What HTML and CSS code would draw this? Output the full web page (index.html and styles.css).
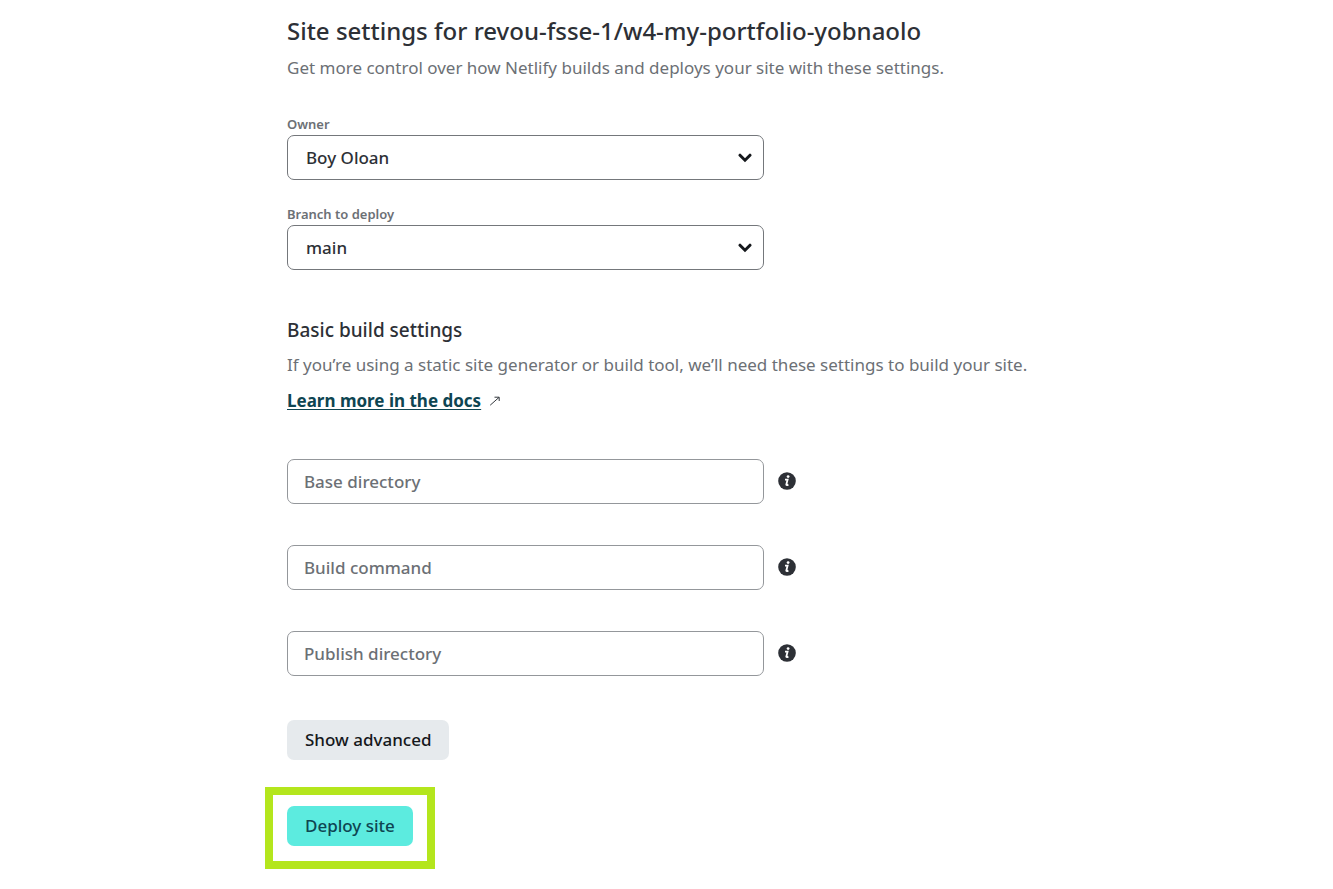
FILE: index.html
```html
<!DOCTYPE html>
<html lang="en">
<head>
<meta charset="utf-8">
<meta name="viewport" content="width=device-width, initial-scale=1">
<title>Site settings</title>
<link rel="stylesheet" href="styles.css">
</head>
<body>
<main class="page">
  <header class="intro">
    <h1 class="title">Site settings for revou-fsse-1/w4-my-portfolio-yobnaolo</h1>
    <p class="text">Get more control over how Netlify builds and deploys your site with these settings.</p>
  </header>
  <form class="form">
    <div class="field">
      <label class="label" for="owner">Owner</label>
      <div class="select-wrap">
        <select class="control select" id="owner"><option>Boy Oloan</option></select>
        <svg class="chevron" viewBox="0 0 14 10" aria-hidden="true"><path d="M2 2.2 7 7.2l5-5" /></svg>
      </div>
    </div>
    <div class="field">
      <label class="label" for="branch">Branch to deploy</label>
      <div class="select-wrap">
        <select class="control select" id="branch"><option>main</option></select>
        <svg class="chevron" viewBox="0 0 14 10" aria-hidden="true"><path d="M2 2.2 7 7.2l5-5" /></svg>
      </div>
    </div>
    <section class="build">
      <h2 class="subtitle">Basic build settings</h2>
      <p class="text">If you’re using a static site generator or build tool, we’ll need these settings to build your site.</p>
      <p class="docs"><a class="link" href="#docs">Learn more in the docs</a><svg class="arrow" viewBox="0 0 12 12" aria-hidden="true"><path d="M1.2 10.2 10 2.4M5.5 2.2H10.2V6" /></svg></p>
    </section>
    <div class="inputs">
      <div class="row">
        <input class="control input" type="text" aria-label="Base directory" placeholder="Base directory">
        <button class="info" type="button" aria-label="About base directory"><svg class="info-icon" viewBox="0 0 18 18" aria-hidden="true"><circle cx="9" cy="9" r="8.8" fill="#2d3036"/><circle cx="10.1" cy="4.6" r="1.4" fill="#fff"/><path d="M7 7.6h2.6L8.3 12.6Q8.2 13.6 10.4 12.6" fill="none" stroke="#fff" stroke-width="1.8"/></svg></button>
      </div>
      <div class="row">
        <input class="control input" type="text" aria-label="Build command" placeholder="Build command">
        <button class="info" type="button" aria-label="About build command"><svg class="info-icon" viewBox="0 0 18 18" aria-hidden="true"><circle cx="9" cy="9" r="8.8" fill="#2d3036"/><circle cx="10.1" cy="4.6" r="1.4" fill="#fff"/><path d="M7 7.6h2.6L8.3 12.6Q8.2 13.6 10.4 12.6" fill="none" stroke="#fff" stroke-width="1.8"/></svg></button>
      </div>
      <div class="row">
        <input class="control input" type="text" aria-label="Publish directory" placeholder="Publish directory">
        <button class="info" type="button" aria-label="About publish directory"><svg class="info-icon" viewBox="0 0 18 18" aria-hidden="true"><circle cx="9" cy="9" r="8.8" fill="#2d3036"/><circle cx="10.1" cy="4.6" r="1.4" fill="#fff"/><path d="M7 7.6h2.6L8.3 12.6Q8.2 13.6 10.4 12.6" fill="none" stroke="#fff" stroke-width="1.8"/></svg></button>
      </div>
    </div>
    <button class="button button-plain" type="button">Show advanced</button>
    <div class="highlight">
      <button class="button button-primary" type="submit">Deploy site</button>
    </div>
  </form>
</main>
</body>
</html>
```
FILE: styles.css
```css
*, *::before, *::after { box-sizing: border-box; }

body {
  margin: 0;
  background: #fff;
  color: #2d3036;
  font-family: "Segoe UI", "Noto Sans", "Open Sans", sans-serif;
  font-size: 17px;
  line-height: 24px;
}

h1, h2, p { margin: 0; }

.page {
  max-width: 799px;
  margin: 0 auto;
  padding: 14px 20px 20px;
}

.intro { margin-bottom: 36px; }

.title {
  margin-bottom: 8px;
  font-size: 24px;
  font-weight: 500;
  line-height: 34px;
}

.text { color: #6c7075; }

.form {
  display: flex;
  flex-direction: column;
  align-items: flex-start;
}

.field {
  width: 100%;
  max-width: 477px;
  margin-bottom: 26px;
}

.label {
  display: block;
  padding-bottom: 2px;
  color: #6c7075;
  font-size: 13px;
  font-weight: 600;
  line-height: 17px;
}

.control {
  width: 100%;
  height: 45px;
  border: 1px solid #94979b;
  border-radius: 7px;
  background: #fff;
  font: inherit;
  font-weight: 500;
}

.select-wrap { display: grid; align-items: center; }

.select-wrap > * { grid-area: 1 / 1; }

.select {
  padding: 0 40px 0 18px;
  border-color: #74777b;
  color: #2d3036;
  appearance: none;
}

.chevron {
  justify-self: end;
  width: 14px;
  height: 10px;
  margin-right: 12px;
  fill: none;
  stroke: #15181c;
  stroke-width: 3;
  stroke-linecap: round;
  pointer-events: none;
}

.build { margin-top: 21px; }

.subtitle {
  margin-bottom: 10px;
  font-size: 19px;
  font-weight: 500;
  line-height: 26px;
}

.docs {
  display: flex;
  align-items: center;
  gap: 8px;
  margin-top: 12px;
}

.link {
  color: #0e4552;
  font-weight: 700;
  text-underline-offset: 2px;
}

.arrow {
  width: 12px;
  height: 12px;
  fill: none;
  stroke: #33383d;
  stroke-width: 1;
}

.inputs {
  display: flex;
  flex-direction: column;
  gap: 41px;
  width: 100%;
  max-width: 509px;
  margin: 46px 0 44px;
}

.row {
  display: flex;
  align-items: center;
  gap: 14px;
}

.input {
  flex: 1;
  min-width: 0;
  padding: 0 16px;
}

.input::placeholder { color: #6c7075; opacity: 1; }

.info {
  display: block;
  padding: 0 0 2px;
  border: 0;
  background: none;
}

.info-icon { display: block; width: 18px; height: 18px; }

.button {
  padding: 8px 18px;
  border: 0;
  border-radius: 7px;
  font: inherit;
  font-weight: 500;
}

.button-plain { background: #e6eaed; color: #15181c; }

.button-primary { display: block; background: #5cebdf; color: #0e4552; }

.highlight {
  margin: 27px 0 0 -22px;
  padding: 11px 14px 15px;
  border: 8px solid #b4e61d;
}
```
